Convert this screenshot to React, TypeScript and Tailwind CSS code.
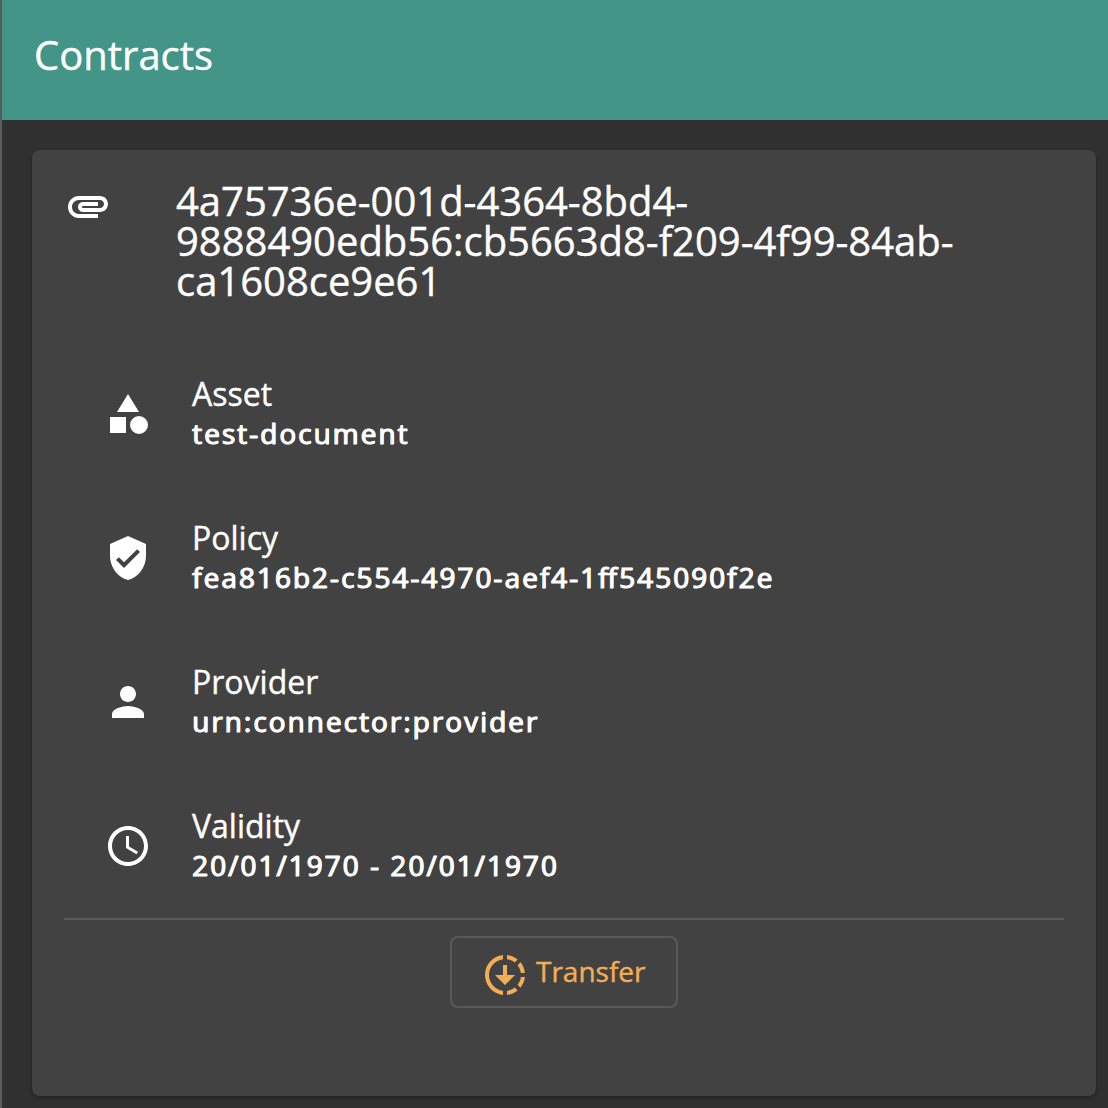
import React from "react";

const icons = {
  clip: "M2 12.5C2 9.46 4.46 7 7.5 7H18c2.21 0 4 1.79 4 4s-1.79 4-4 4H9.5C8.12 15 7 13.88 7 12.5S8.12 10 9.5 10H17v2H9.41c-.55 0-.55 1 0 1H18c1.1 0 2-.9 2-2s-.9-2-2-2H7.5C5.57 9 4 10.57 4 12.5S5.57 16 7.5 16H17v2H7.5C4.46 18 2 15.54 2 12.5z",
  policy: "M12 1L3 5v6c0 5.55 3.84 10.74 9 12 5.16-1.26 9-6.45 9-12V5l-9-4zm-2 16l-4-4 1.41-1.41L10 14.17l6.59-6.59L18 9l-8 8z",
  person: "M12 12c2.21 0 4-1.79 4-4s-1.79-4-4-4-4 1.79-4 4 1.79 4 4 4zm0 2c-2.67 0-8 1.34-8 4v2h16v-2c0-2.66-5.33-4-8-4z",
  clock: "M11.99 2C6.47 2 2 6.48 2 12s4.47 10 9.99 10C17.52 22 22 17.52 22 12S17.52 2 11.99 2zM12 20c-4.42 0-8-3.58-8-8s3.58-8 8-8 8 3.58 8 8-3.58 8-8 8zm.5-13H11v6l5.25 3.15.75-1.23-4.5-2.67z",
  category: "M12 2l-5.5 9h11zM17.5 13a4.5 4.5 0 1 0 0 9 4.5 4.5 0 0 0 0-9zM3 13.500h8v8H3z",
  transfer: "M18.32 4.26C16.84 3.05 15.01 2.25 13 2.05v2.02c1.46.18 2.79.76 3.9 1.62l1.42-1.43zM19.93 11h2.02c-.2-2.01-1-3.84-2.21-5.32L18.31 7.1c.86 1.11 1.44 2.44 1.62 3.9zm-1.62 5.9l1.43 1.43c1.21-1.48 2.01-3.32 2.21-5.32h-2.02c-.18 1.45-.76 2.78-1.62 3.89zM13 19.93v2.02c2.01-.2 3.84-1 5.32-2.21l-1.43-1.43c-1.1.86-2.43 1.44-3.89 1.62zM13 12V7h-2v5H7l5 5 5-5h-4zm-2 7.93v2.02c-5.05-.5-9-4.76-9-9.95s3.95-9.45 9-9.95v2.02C7.05 4.56 4 7.92 4 12s3.05 7.44 7 7.93z",
};

function Icon({ name, className = "" }: { name: keyof typeof icons; className?: string }) {
  return <svg viewBox="0 0 24 24" fill="currentColor" className={`size-12 shrink-0 ${className}`}><path d={icons[name]} /></svg>;
}

const rows: { icon: keyof typeof icons; label: string; value: string }[] = [
  { icon: "category", label: "Asset", value: "test-document" },
  { icon: "policy", label: "Policy", value: "fea816b2-c554-4970-aef4-1ff545090f2e" },
  { icon: "person", label: "Provider", value: "urn:connector:provider" },
  { icon: "clock", label: "Validity", value: "20/01/1970 - 20/01/1970" },
];

export default function App() {
  return (
    <div className="h-[1108px] w-[1108px] overflow-hidden border-l-2 border-[#5a5a5a] bg-[#303030] font-['Open_Sans',sans-serif] text-white [-webkit-text-stroke:0.4px_currentColor]">
      <header className="flex h-[120px] items-start bg-[#439588] pl-8 pt-[31px]">
        <h1 className="text-[40px] leading-[48px]">Contracts</h1>
      </header>
      <main className="ml-[30px] mr-3 mt-[30px] h-[946px] rounded-lg bg-[#424242] px-8 pt-8 shadow-[0_2px_4px_rgba(0,0,0,0.3)]">
        <div className="flex h-[160px] items-start">
          <Icon name="clip" />
          <h2 className="-mt-px ml-16 text-[40px] leading-10 tracking-[-0.02px]">
            4a75736e-001d-4364-8bd4-<br />
            9888490edb56:cb5663d8-f209-4f99-84ab-<br />
            ca1608ce9e61
          </h2>
        </div>
        <div className="pl-10">
          {rows.map((r) => (
            <div key={r.label} className="flex h-36 items-center">
              <Icon name={r.icon} />
              <div className="ml-10">
                <div className="text-[32px] leading-10">{r.label}</div>
                <div className="-mt-px mb-px text-[28px] leading-10 tracking-[2px] [-webkit-text-stroke:0.9px_currentColor] [font-feature-settings:'liga'] [text-shadow:0.7px_0_0_currentColor]">{r.value}</div>
              </div>
            </div>
          ))}
        </div>
        <div className="flex justify-center border-t-2 border-[#5a5a5a] pt-4">
          <button className="flex h-[72px] w-[228px] items-center rounded-lg border-2 border-[#5a5a5a] pl-[29px] text-[28px] text-[#f5ad55]">
            <Icon name="transfer" className="mt-[5px]" />
            <span className="-mt-0.5 ml-[7px]">Transfer</span>
          </button>
        </div>
      </main>
    </div>
  );
}
